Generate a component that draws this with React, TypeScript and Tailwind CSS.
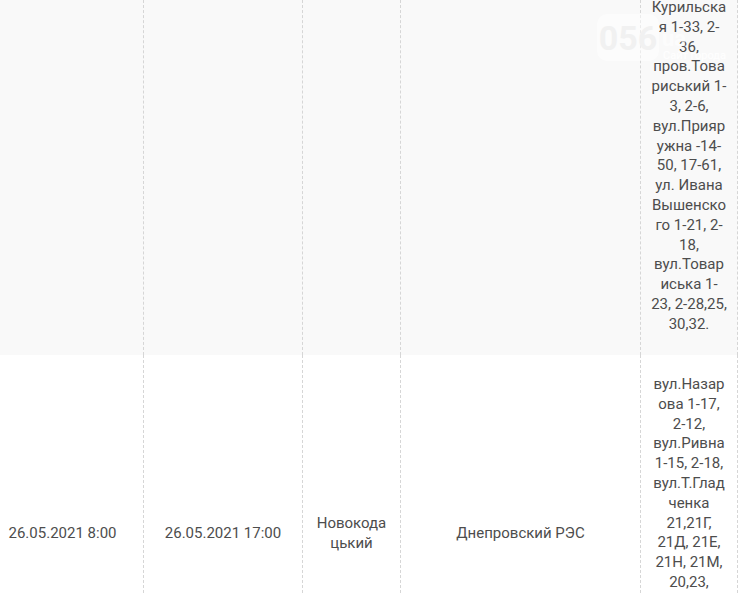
const FONT = { fontFamily: 'Roboto, "Liberation Sans", sans-serif' };

const ROW1_STREETS =
  'Курильская 1-33, 2-36, пров.Товариський 1-3, 2-6, вул.Прияружна -14-50, 17-61, ул. Ивана Вышенского 1-21, 2-18, вул.Товариська 1-23, 2-28,25, 30,32.';

const ROW2_STREETS =
  'вул.Назарова 1-17, 2-12, вул.Ривна 1-15, 2-18, вул.Т.Гладченка 21,21Г, 21Д, 21Е, 21Н, 21М, 20,23,';

const cellBorder = 'border-l border-dashed border-[#d6d6d6]';

function Watermark() {
  return (
    <div className="pointer-events-none absolute left-[597px] top-[14px] select-none">
      <div className="flex h-[47px] w-[62px] items-center justify-center rounded-[10px] bg-white/50">
        <span className="text-[34px] font-bold leading-none text-[#f1f1f1]">056</span>
      </div>
      <span className="absolute left-[65px] top-[14px] text-[22px] font-bold leading-none text-white/60">ua</span>
      <span className="absolute left-[66px] top-[36px] whitespace-nowrap text-[11px] leading-none text-white/90">
        Сайт города
      </span>
    </div>
  );
}

export default function App() {
  return (
    <div className="relative h-[593px] w-[740px] overflow-hidden bg-white text-[15px] text-[#4d4d4d]" style={FONT}>
      <div className="-ml-[18px] grid grid-cols-[161px_159px_98px_240px_98px] leading-[19.8px]">
        {/* row 1 (scrolled, only tail visible) */}
        <div className="h-[355px] bg-[#f9f9f9]" />
        <div className={`h-[355px] bg-[#f9f9f9] ${cellBorder}`} />
        <div className={`h-[355px] bg-[#f9f9f9] ${cellBorder}`} />
        <div className={`h-[355px] bg-[#f9f9f9] ${cellBorder}`} />
        <div className={`h-[355px] bg-[#f9f9f9] px-[10px] border-r ${cellBorder}`}>
          <p className="-mt-[2px] text-center [overflow-wrap:anywhere]">{ROW1_STREETS}</p>
        </div>

        {/* row 2 */}
        <div className="flex h-[358px] items-center justify-center px-[10px] text-center">26.05.2021 8:00</div>
        <div className={`flex h-[358px] items-center justify-center px-[10px] text-center ${cellBorder}`}>
          26.05.2021 17:00
        </div>
        <div className={`flex h-[358px] items-center justify-center px-[10px] ${cellBorder}`}>
          <p className="text-center [overflow-wrap:anywhere]">Новокодацький</p>
        </div>
        <div className={`flex h-[358px] items-center justify-center px-[10px] text-center ${cellBorder}`}>
          Днепровский РЭС
        </div>
        <div className={`h-[358px] px-[10px] pt-[20px] border-r ${cellBorder}`}>
          <p className="text-center [overflow-wrap:anywhere]">{ROW2_STREETS}</p>
        </div>
      </div>
      <Watermark />
    </div>
  );
}
